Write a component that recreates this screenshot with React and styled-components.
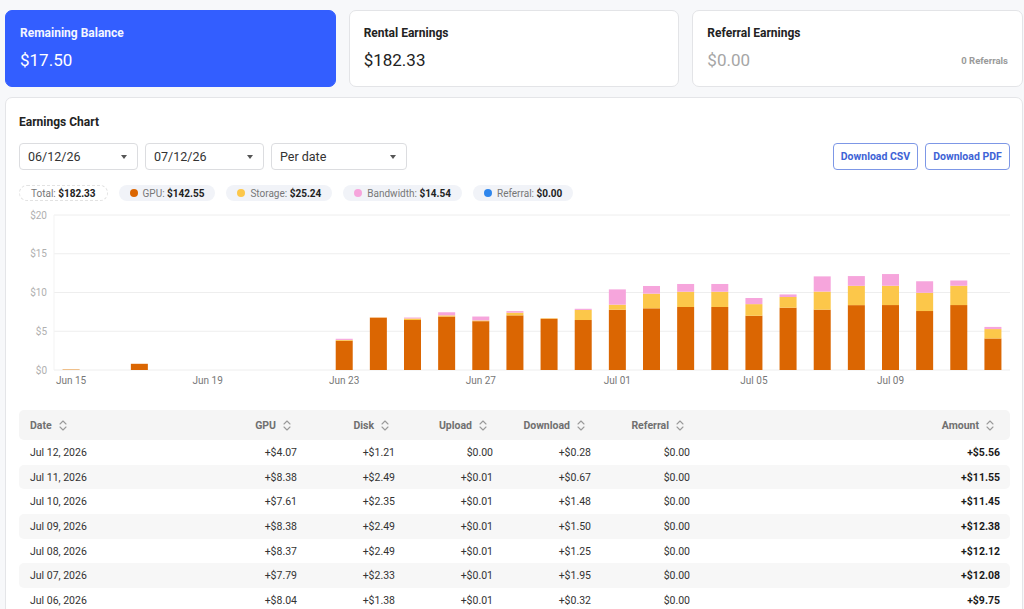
import React from "react";
import styled, { createGlobalStyle } from "styled-components";

const GlobalStyle = createGlobalStyle`
  body {
    margin: 0;
    background: #f7f8fa;
    font-family: Roboto, "Liberation Sans", Arial, sans-serif;
    color: #222;
  }
`;

const Page = styled.div`
  padding: 10px 1px 0 5px;
  height: 599px;
  overflow: hidden;
`;

const Cards = styled.div`
  display: grid;
  grid-template-columns: repeat(3, 1fr);
  gap: 13px;
`;

const Card = styled.div`
  height: 77px;
  box-sizing: border-box;
  padding: 15px 14px 0;
  border-radius: 7px;
  background: ${(p) => (p.primary ? "#335eff" : "#fff")};
  border: 1px solid ${(p) => (p.primary ? "#335eff" : "#e3e4e7")};
  color: ${(p) => (p.primary ? "#fff" : "#222")};
`;

const CardTitle = styled.div`
  font-size: 12px;
  font-weight: 700;
  line-height: 14px;
  opacity: ${(p) => (p.primary ? 0.95 : 1)};
`;

const CardValueRow = styled.div`
  display: flex;
  align-items: center;
  justify-content: space-between;
  margin-top: 10px;
`;

const CardValue = styled.div`
  font-size: 17px;
  line-height: 20px;
  color: ${(p) => (p.muted ? "#a6a6a6" : "inherit")};
`;

const CardNote = styled.div`
  font-size: 9.5px;
  font-weight: 700;
  color: #9a9a9a;
`;

const Panel = styled.div`
  margin-top: 10px;
  background: #fff;
  border: 1px solid #e4e5e8;
  border-radius: 7px;
  padding: 16px 12px 0 13px;
  height: 600px;
`;

const PanelTitle = styled.div`
  font-size: 12px;
  font-weight: 700;
  line-height: 16px;
`;

const Toolbar = styled.div`
  display: flex;
  align-items: center;
  margin-top: 13px;
  gap: 7px;
`;

const Select = styled.div`
  width: ${(p) => p.w}px;
  height: 27px;
  box-sizing: border-box;
  border: 1px solid #dcdde0;
  border-radius: 4px;
  display: flex;
  align-items: center;
  justify-content: space-between;
  padding: 0 10px 0 8px;
  font-size: 12.5px;
  color: #333;
  &::after {
    content: "";
    border-left: 3.5px solid transparent;
    border-right: 3.5px solid transparent;
    border-top: 4.5px solid #555;
  }
`;

const Spacer = styled.div`
  flex: 1;
`;

const OutlineButton = styled.button`
  width: 85px;
  height: 27px;
  border: 1px solid #7d97e6;
  border-radius: 4px;
  background: #fff;
  color: #3e63d6;
  font-family: inherit;
  font-size: 10.5px;
  font-weight: 700;
  padding: 0;
`;

const Legend = styled.div`
  display: flex;
  gap: 11px;
  margin-top: 15px;
`;

const Pill = styled.div`
  display: flex;
  align-items: center;
  gap: 5px;
  height: 16px;
  padding: 0 ${(p) => (p.dashed ? 11 : 10)}px;
  border-radius: 8px;
  background: ${(p) => (p.dashed ? "#fff" : "#f1f3f8")};
  border: 1px dashed ${(p) => (p.dashed ? "#e2e2e2" : "transparent")};
  box-sizing: border-box;
  font-size: 10px;
  color: #777;
  & b {
    color: #222;
  }
`;

const Dot = styled.span`
  width: 8px;
  height: 8px;
  border-radius: 50%;
  background: ${(p) => p.c};
`;

const ChartSvg = styled.svg`
  display: block;
  margin-top: 4px;
  font-family: Roboto, "Liberation Sans", sans-serif;
`;

const Table = styled.table`
  width: 991px;
  margin-top: 9px;
  table-layout: fixed;
  border-collapse: separate;
  border-spacing: 0;
  font-size: 10.5px;
  color: #333;
`;

const Th = styled.th`
  box-sizing: border-box;
  height: 30px;
  padding: 0 ${(p) => (p.left ? 0 : 16)}px 0 ${(p) => (p.left ? 11 : 0)}px;
  text-align: ${(p) => (p.left ? "left" : "right")};
  width: ${(p) => p.w}px;
  font-size: 10.5px;
  font-weight: 700;
  color: #707070;
  background: #f5f5f5;
  &:first-child {
    border-radius: 5px 0 0 5px;
  }
  &:last-child {
    border-radius: 0 5px 5px 0;
  }
  & span {
    display: inline-flex;
    align-items: center;
    gap: 7px;
  }
`;

const Tr = styled.tr`
  & td {
    background: ${(p) => (p.striped ? "#f7f7f7" : "#fff")};
  }
  & td:first-child {
    border-radius: 5px 0 0 5px;
  }
  & td:last-child {
    border-radius: 0 5px 5px 0;
  }
`;

const Td = styled.td`
  box-sizing: border-box;
  height: 24.7px;
  padding: 0 ${(p) => (p.left ? 0 : 10)}px 0 ${(p) => (p.left ? 11 : 0)}px;
  text-align: ${(p) => (p.left ? "left" : "right")};
  font-weight: ${(p) => (p.bold ? 700 : 400)};
  color: ${(p) => (p.bold ? "#1a1a1a" : "#333")};
`;

const SortIcon = () => (
  <svg width="8" height="11" viewBox="0 0 8 11" fill="none" stroke="#9a9a9a" strokeWidth="1.1" strokeLinecap="round" strokeLinejoin="round">
    <path d="M1 4 L4 1 L7 4" />
    <path d="M1 7 L4 10 L7 7" />
  </svg>
);

const COLORS = { gpu: "#db6602", storage: "#fcc74a", bw: "#f6a5dc" };

// gpu, storage, bandwidth per day, Jun 15 .. Jul 12
const DATA = [
  [0.05, 0.02, 0], [0, 0, 0], [0.8, 0, 0], [0, 0, 0], [0, 0, 0], [0, 0, 0], [0, 0, 0], [0, 0, 0],
  [3.78, 0.1, 0.15], [6.75, 0.05, 0.02], [6.45, 0.2, 0.12], [6.9, 0.15, 0.4], [6.3, 0.1, 0.5],
  [7.05, 0.35, 0.2], [6.58, 0.1, 0.02], [6.45, 1.3, 0.15], [7.78, 0.65, 1.97], [7.96, 1.89, 0.99],
  [8.13, 1.97, 1.0], [8.13, 1.97, 1.0], [7.0, 1.5, 0.79], [8.04, 1.38, 0.33], [7.79, 2.33, 1.96],
  [8.37, 2.49, 1.26], [8.38, 2.49, 1.51], [7.61, 2.35, 1.49], [8.38, 2.49, 0.68], [4.07, 1.21, 0.28],
];

const X_LABELS = ["Jun 15", "Jun 19", "Jun 23", "Jun 27", "Jul 01", "Jul 05", "Jul 09"];

const Chart = () => {
  const left = 35;
  const right = 991;
  const y0 = 165;
  const k = 7.75;
  const slot = (right - left) / DATA.length;
  const bw = 17;
  return (
    <ChartSvg width="991" height="196">
      {[0, 5, 10, 15, 20].map((v) => (
        <g key={v}>
          <line x1={left} x2={right} y1={y0 - v * k} y2={y0 - v * k} stroke="#eeeeee" />
          <text x="28" y={y0 - v * k + 3.5} fontSize="10" fill="#b0b0b0" textAnchor="end">${v}</text>
        </g>
      ))}
      <line x1={left} x2={left} y1={y0 - 20 * k} y2={y0} stroke="#f3f3f3" />
      {DATA.map(([g, s, b], i) => {
        const x = left + slot * i + (slot - bw) / 2;
        const hg = g * k;
        const hs = s * k;
        const hb = b * k;
        return (
          <g key={i}>
            <rect x={x} y={y0 - hg} width={bw} height={hg} fill={COLORS.gpu} />
            <rect x={x} y={y0 - hg - hs} width={bw} height={hs} fill={COLORS.storage} />
            <rect x={x} y={y0 - hg - hs - hb} width={bw} height={hb} fill={COLORS.bw} />
          </g>
        );
      })}
      {X_LABELS.map((l, i) => (
        <text key={l} x={left + slot * (i * 4) + slot / 2} y="179" fontSize="10" fill="#777" textAnchor="middle">
          {l}
        </text>
      ))}
    </ChartSvg>
  );
};

const ROWS = [
  ["Jul 12, 2026", "+$4.07", "+$1.21", "$0.00", "+$0.28", "$0.00", "+$5.56"],
  ["Jul 11, 2026", "+$8.38", "+$2.49", "+$0.01", "+$0.67", "$0.00", "+$11.55"],
  ["Jul 10, 2026", "+$7.61", "+$2.35", "+$0.01", "+$1.48", "$0.00", "+$11.45"],
  ["Jul 09, 2026", "+$8.38", "+$2.49", "+$0.01", "+$1.50", "$0.00", "+$12.38"],
  ["Jul 08, 2026", "+$8.37", "+$2.49", "+$0.01", "+$1.25", "$0.00", "+$12.12"],
  ["Jul 07, 2026", "+$7.79", "+$2.33", "+$0.01", "+$1.95", "$0.00", "+$12.08"],
  ["Jul 06, 2026", "+$8.04", "+$1.38", "+$0.01", "+$0.32", "$0.00", "+$9.75"],
];

const COLS = [
  { name: "Date", w: 190, left: true },
  { name: "GPU", w: 98 },
  { name: "Disk", w: 98 },
  { name: "Upload", w: 98 },
  { name: "Download", w: 98 },
  { name: "Referral", w: 99 },
  { name: "Amount", w: 310 },
];

export default function App() {
  return (
    <>
      <GlobalStyle />
      <Page>
        <Cards>
          <Card primary>
            <CardTitle primary>Remaining Balance</CardTitle>
            <CardValueRow>
              <CardValue>$17.50</CardValue>
            </CardValueRow>
          </Card>
          <Card>
            <CardTitle>Rental Earnings</CardTitle>
            <CardValueRow>
              <CardValue>$182.33</CardValue>
            </CardValueRow>
          </Card>
          <Card>
            <CardTitle>Referral Earnings</CardTitle>
            <CardValueRow>
              <CardValue muted>$0.00</CardValue>
              <CardNote>0 Referrals</CardNote>
            </CardValueRow>
          </Card>
        </Cards>

        <Panel>
          <PanelTitle>Earnings Chart</PanelTitle>
          <Toolbar>
            <Select w={119}>06/12/26</Select>
            <Select w={119}>07/12/26</Select>
            <Select w={136}>Per date</Select>
            <Spacer />
            <OutlineButton>Download CSV</OutlineButton>
            <OutlineButton>Download PDF</OutlineButton>
          </Toolbar>
          <Legend>
            <Pill dashed>
              <span>
                Total: <b>$182.33</b>
              </span>
            </Pill>
            <Pill>
              <Dot c={COLORS.gpu} />
              <span>
                GPU: <b>$142.55</b>
              </span>
            </Pill>
            <Pill>
              <Dot c={COLORS.storage} />
              <span>
                Storage: <b>$25.24</b>
              </span>
            </Pill>
            <Pill>
              <Dot c={COLORS.bw} />
              <span>
                Bandwidth: <b>$14.54</b>
              </span>
            </Pill>
            <Pill>
              <Dot c="#2f86ec" />
              <span>
                Referral: <b>$0.00</b>
              </span>
            </Pill>
          </Legend>
          <Chart />
          <Table>
            <thead>
              <tr>
                {COLS.map((c) => (
                  <Th key={c.name} w={c.w} left={c.left}>
                    <span>
                      {c.name}
                      <SortIcon />
                    </span>
                  </Th>
                ))}
              </tr>
            </thead>
            <tbody>
              {ROWS.map((r, i) => (
                <Tr key={r[0]} striped={i % 2 === 1}>
                  {r.map((v, j) => (
                    <Td key={j} left={j === 0} bold={j === 6}>
                      {v}
                    </Td>
                  ))}
                </Tr>
              ))}
            </tbody>
          </Table>
        </Panel>
      </Page>
    </>
  );
}
